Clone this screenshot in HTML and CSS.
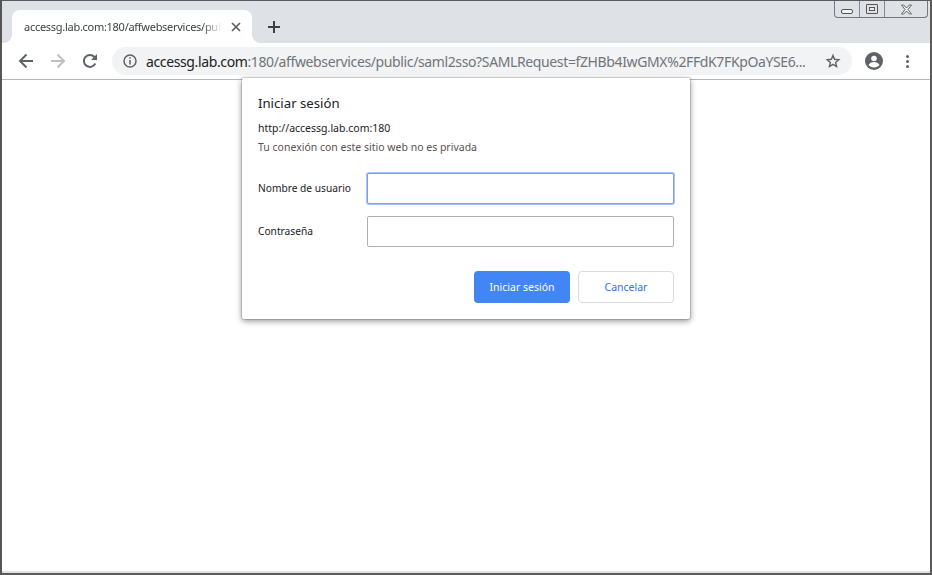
FILE: index.html
```html
<!DOCTYPE html>
<html lang="es">
<head>
<meta charset="utf-8">
<title>Iniciar sesión</title>
<link rel="stylesheet" href="styles.css">
</head>
<body>
<div class="window">
  <div class="tabstrip">
    <div class="tab">
      <span class="tab-title">accessg.lab.com:180/affwebservices/public/saml2sso</span>
      <svg class="tab-close" width="10" height="10" viewBox="0 0 10 10"><path d="M1 1l8 8M9 1l-8 8" stroke="#5f6368" stroke-width="1.7" fill="none"/></svg>
    </div>
    <svg class="new-tab" width="14" height="14" viewBox="0 0 14 14"><path d="M7 1v12M1 7h12" stroke="#3c4043" stroke-width="2" fill="none"/></svg>
    <div class="caption">
      <div class="cap cap-min"><span class="min-glyph"></span></div>
      <div class="cap cap-max"><span class="max-glyph"></span></div>
      <div class="cap cap-close">
        <svg width="13" height="11" viewBox="0 0 13 11"><path d="M1.5 1h2.2l2.8 3 2.8-3h2.2L8 5.500l3.500 4.500H9.300L6.500 7l-2.800 3H1.500L5 5.500z" stroke="#666" stroke-width="1" fill="#eef0f2"/></svg>
      </div>
    </div>
  </div>
  <div class="toolbar">
    <svg class="nav" width="16" height="16" viewBox="0 0 16 16"><path d="M15 8H2.500M8.500 1.500L2 8l6.500 6.500" stroke="#5f6368" stroke-width="2" fill="none"/></svg>
    <svg class="nav" width="16" height="16" viewBox="0 0 16 16"><path d="M1 8h12.500M7.500 1.500L14 8l-6.500 6.500" stroke="#bdc1c6" stroke-width="2" fill="none"/></svg>
    <svg class="nav" width="16" height="16" viewBox="0 0 16 16"><path d="M13.300 10.500A6 6 0 1 1 12.200 3.700L14 5.500" stroke="#5f6368" stroke-width="2" fill="none"/><path d="M15 1v6H9z" fill="#5f6368"/></svg>
    <div class="omnibox">
      <svg class="info" width="14" height="14" viewBox="0 0 14 14"><circle cx="7" cy="7" r="6" stroke="#5f6368" stroke-width="1.500" fill="none"/><path d="M7 6v4.500M7 3.300v1.500" stroke="#5f6368" stroke-width="1.500" fill="none"/></svg>
      <div class="url"><span class="host">accessg.lab.com</span>:180/affwebservices/public/saml2sso?SAMLRequest=fZHBb4IwGMX%2FFdK7FKpOaYSE6...</div>
      <svg class="star" width="16" height="16" viewBox="0 0 16 16"><path d="M8 2.400l1.600 3.900 4.200.4-3.200 2.700 1 4.100L8 11.400l-3.600 2.100 1-4.100-3.200-2.700 4.200-.4z" stroke="#5f6368" stroke-width="1.400" fill="none"/></svg>
    </div>
    <svg class="avatar" width="18" height="18" viewBox="0 0 18 18"><circle cx="9" cy="9" r="9" fill="#5f6368"/><circle cx="9" cy="6.500" r="2.800" fill="#fff"/><path d="M3.500 13c1-2 3.300-3 5.500-3s4.500 1 5.500 3c-1.200 1.500-3.300 2.400-5.500 2.400S4.700 14.500 3.500 13z" fill="#fff"/></svg>
    <div class="menu-dots"><span></span><span></span><span></span></div>
  </div>
  <div class="content"></div>
  <div class="bottom-strip"></div>
</div>
<form class="dialog">
  <h1 class="dialog-title">Iniciar sesión</h1>
  <p class="origin">http://accessg.lab.com:180</p>
  <p class="warning">Tu conexión con este sitio web no es privada</p>
  <div class="fields">
    <label class="label" for="user">Nombre de usuario</label>
    <input class="input input-focus" id="user" type="text">
    <label class="label" for="pass">Contraseña</label>
    <input class="input" id="pass" type="password">
  </div>
  <div class="actions">
    <button class="btn btn-primary" type="button">Iniciar sesión</button>
    <button class="btn btn-secondary" type="button">Cancelar</button>
  </div>
</form>
</body>
</html>
```
FILE: styles.css
```css
* { box-sizing: border-box; }
html, body { margin: 0; height: 100%; }
body { font-family: "Noto Sans", "Open Sans", sans-serif; background: #fff; overflow: hidden; color: #202124; }
.window {
  width: 932px; height: 575px; display: flex; flex-direction: column;
  border: 1px solid #5a5a5a; border-left-width: 2px; border-right-width: 2px; border-bottom-width: 2px;
  border-left-color: #555; background: #fff;
}
.tabstrip { height: 42px; flex: none; background: #dee1e6; display: flex; align-items: flex-end; padding-left: 10px; position: relative; }
.tab {
  width: 240px; height: 33px; background: #fff; border-radius: 8px 8px 0 0;
  display: flex; align-items: center; padding-left: 12px; position: relative;
}
.tab::before, .tab::after { content: ""; position: absolute; bottom: 0; width: 8px; height: 8px; }
.tab::before { left: -8px; background: radial-gradient(circle at 0 0, #dee1e6 7.500px, #fff 8px); }
.tab::after { right: -8px; background: radial-gradient(circle at 100% 0, #dee1e6 7.500px, #fff 8px); }
.tab-title {
  font-size: 11px; letter-spacing: -0.28px; color: #3c4043; white-space: nowrap; overflow: hidden; width: 198px;
  -webkit-mask-image: linear-gradient(90deg, #000 90%, transparent);
  mask-image: linear-gradient(90deg, #000 90%, transparent);
}
.tab-close { margin-left: 9px; flex: none; }
.new-tab { margin: 0 0 9px 15px; flex: none; }
.caption {
  position: absolute; top: 0; right: 2px; display: flex; height: 17px;
  border: 1px solid #777; border-top: none; border-radius: 0 0 4px 4px; background: #dee1e6;
}
.cap { display: flex; align-items: center; justify-content: center; height: 100%; }
.cap-min { width: 25px; border-right: 1px solid #888; }
.cap-max { width: 25px; border-right: 1px solid #888; }
.cap-close { width: 42px; }
.min-glyph { width: 12px; height: 5px; border: 1px solid #555; border-radius: 2px; background: #f4f4f4; margin-top: 4px; }
.max-glyph { width: 12px; height: 10px; border: 1px solid #555; border-radius: 1px; background: #eee; box-shadow: inset 0 0 0 2px #dee1e6, inset 0 0 0 3px #555; }
.toolbar { height: 37px; flex: none; background: #fff; border-bottom: 1px solid #b4b6b9; display: flex; align-items: center; padding: 0 0 0 16px; }
.nav { flex: none; margin-right: 16px; }
.omnibox {
  height: 28px; width: 740px; flex: none; margin-left: -2px; background: #f1f3f4; border-radius: 14px;
  display: flex; align-items: center; padding-left: 11px;
}
.info { flex: none; }
.url {
  margin-left: 9px; width: 672px; flex: none; font-size: 14px; letter-spacing: -0.375px; color: #70757a; white-space: nowrap; overflow: hidden;
}
.host { color: #202124; }
.star { flex: none; margin-left: 7px; }
.avatar { flex: none; margin-left: 13px; }
.menu-dots { display: flex; flex-direction: column; gap: 2px; margin-left: 23px; }
.menu-dots span { width: 3px; height: 3px; border-radius: 50%; background: #5f6368; }
.content { flex: 1; background: #fff; }
.bottom-strip { height: 2px; flex: none; background: #dfe1e4; }
.dialog {
  position: absolute; left: 242px; top: 78px; width: 448px; height: 241px;
  background: #fff; border-radius: 2px; padding: 16px 16px 0;
  box-shadow: 0 0 0 1px rgba(0,0,0,.12), 0 2px 6px rgba(0,0,0,.45);
}
.dialog-title { margin: 0; font-size: 13.200px; font-weight: 400; line-height: 19px; color: #202124; }
.origin { margin: 8px 0 0; font-size: 10.500px; line-height: 14px; color: #202124; }
.warning { margin: 5px 0 0; font-size: 10.500px; line-height: 14px; color: #5c5050; }
.fields { display: grid; grid-template-columns: 109px 307px; row-gap: 12px; align-items: center; margin-top: 19px; }
.label { font-size: 10.200px; color: #202124; padding-bottom: 2px; }
.input { height: 31px; width: 307px; border: 1px solid #aeb0b3; border-radius: 2px; background: #fff; outline: none; padding: 0 6px; }
.input-focus { border-color: #7a9fe8; box-shadow: 0 0 0 1px #a9c3f3; }
.actions { display: flex; justify-content: flex-end; gap: 8px; margin-top: 24px; }
.btn { width: 96px; height: 32px; border-radius: 4px; font-family: inherit; font-size: 10.500px; padding: 0; }
.btn-primary { background: #4285f4; border: none; color: #fff; }
.btn-secondary { background: #fff; border: 1px solid #dadce0; color: #2f74e6; }
```
